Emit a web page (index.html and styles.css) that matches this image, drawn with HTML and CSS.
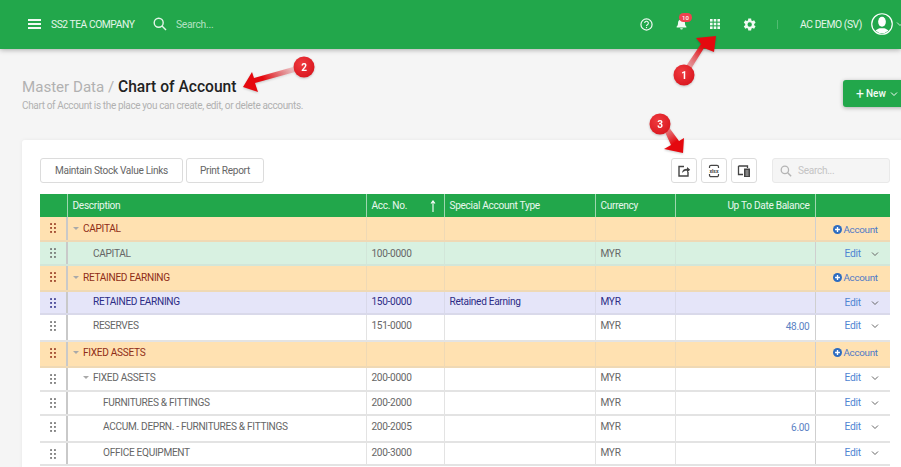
FILE: index.html
```html
<!DOCTYPE html>
<html lang="en">
<head>
<meta charset="utf-8">
<title>Chart of Account</title>
<link rel="stylesheet" href="styles.css">
</head>
<body>
<div class="app">
  <svg width="0" height="0" class="defs">
    <defs>
      <symbol id="grip" viewBox="0 0 6 10"><g fill="currentColor"><rect x=".2" y=".2" width="1.7" height="1.7"/><rect x="4.1" y=".2" width="1.7" height="1.7"/><rect x=".2" y="4.1" width="1.7" height="1.7"/><rect x="4.1" y="4.1" width="1.7" height="1.7"/><rect x=".2" y="8.100" width="1.7" height="1.7"/><rect x="4.1" y="8.100" width="1.7" height="1.7"/></g></symbol>
      <symbol id="chev" viewBox="0 0 8 6"><path d="M1 1.5l3 3 3-3" fill="none" stroke="currentColor" stroke-width="1"/></symbol>
      <symbol id="plus" viewBox="0 0 10 10"><circle cx="5" cy="5" r="5" fill="currentColor"/><path d="M5 2.3v5.4M2.3 5h5.4" stroke="#fff" stroke-width="1.5"/></symbol>
    </defs>
  </svg>
  <header class="topbar">
    <button class="menu" aria-label="Menu"><span></span><span></span><span></span></button>
    <div class="company">SS2 TEA COMPANY</div>
    <svg class="search-ico" viewBox="0 0 14 14" width="14" height="14"><circle cx="5.7" cy="5.7" r="4.5" fill="none" stroke="currentColor" stroke-width="1.4"/><path d="M9 9l4 4" stroke="currentColor" stroke-width="1.5"/></svg>
    <div class="top-search">Search...</div>
    <div class="spacer"></div>
    <svg class="t-ico help" viewBox="0 0 14 14" width="13" height="13"><circle cx="7" cy="7" r="6" fill="none" stroke="currentColor" stroke-width="1.3"/><path d="M5 5.5a2 2 0 1 1 3 1.7c-.7.4-1 .7-1 1.5" fill="none" stroke="currentColor" stroke-width="1.2"/><rect x="6.4" y="9.6" width="1.2" height="1.3" fill="currentColor"/></svg>
    <div class="bell">
      <svg viewBox="0 0 12 13" width="11" height="12"><path d="M6 0.8c.6 0 1 .4 1 .9 1.8.4 2.8 1.9 2.8 3.7 0 2 .6 3 1.5 3.9v.9H.7v-.9c.9-.9 1.5-1.9 1.5-3.9C2.2 3.6 3.2 2.100 5 1.700c0-.5.4-.9 1-.9zM4.500 11h3a1.500 1.500 0 0 1-3 0z" fill="currentColor"/></svg>
      <span class="badge">10</span>
    </div>
    <svg class="t-ico apps" viewBox="0 0 10 10" width="10" height="10"><g fill="currentColor"><rect width="2.600" height="2.600"/><rect x="3.700" width="2.600" height="2.600"/><rect x="7.400" width="2.600" height="2.600"/><rect y="3.700" width="2.600" height="2.600"/><rect x="3.700" y="3.700" width="2.600" height="2.600"/><rect x="7.400" y="3.700" width="2.600" height="2.600"/><rect y="7.400" width="2.600" height="2.600"/><rect x="3.700" y="7.400" width="2.600" height="2.600"/><rect x="7.400" y="7.400" width="2.600" height="2.600"/></g></svg>
    <svg class="t-ico gear" viewBox="0 0 24 24" width="15" height="15"><path fill="currentColor" d="M19.400 13a7.500 7.500 0 0 0 0-2l2.300-1.800-2.300-3.900-2.700 1.100a7.500 7.500 0 0 0-1.700-1L14.600 2.500H10l-.4 2.900a7.500 7.500 0 0 0-1.700 1L5.200 5.300 2.900 9.200 5.200 11a7.500 7.500 0 0 0 0 2l-2.300 1.800 2.300 3.900 2.700-1.100a7.500 7.500 0 0 0 1.700 1l.4 2.900h4.600l.4-2.900a7.500 7.500 0 0 0 1.700-1l2.700 1.100 2.300-3.900zM12.300 15.500a3.500 3.500 0 1 1 0-7 3.500 3.500 0 0 1 0 7z"/></svg>
    <div class="divider"></div>
    <div class="user">AC DEMO (SV)</div>
    <svg class="avatar" viewBox="0 0 24 24" width="22" height="22"><circle cx="12" cy="12" r="11.200" fill="#21a74b" stroke="#fff" stroke-width="1.300"/><clipPath id="av"><circle cx="12" cy="12" r="10"/></clipPath><g clip-path="url(#av)" fill="#fff"><ellipse cx="12" cy="9.500" rx="4.200" ry="5.500"/><path d="M3 24c0-5 4-6.500 6.500-7.500h5C17 17.500 21 19 21 24z"/></g></svg>
    <svg class="user-chev"><use href="#chev"/></svg>
  </header>

  <main class="page">
    <div class="title-row">
      <div>
        <h1 class="title"><span class="crumb">Master Data / </span><strong>Chart of Account</strong></h1>
        <p class="sub">Chart of Account is the place you can create, edit, or delete accounts.</p>
      </div>
      <button class="new-btn"><span class="plus">+</span>New<svg class="new-chev"><use href="#chev"/></svg></button>
    </div>

    <section class="card">
      <div class="toolbar">
        <button class="btn">Maintain Stock Value Links</button>
        <button class="btn btn-print">Print Report</button>
        <div class="spacer"></div>
        <button class="icon-btn" aria-label="Export"><svg viewBox="0 0 14 14" width="14" height="14"><path d="M7 2.500H2v9.500h9V8" fill="none" stroke="currentColor" stroke-width="1.400"/><path d="M5 9c.2-2.800 2-4.300 5-4.300V3l3.200 2.700L10 8.400V6.700C8 6.700 6.400 7.300 5 9z" fill="currentColor"/></svg></button>
        <button class="icon-btn" aria-label="Excel"><svg viewBox="0 0 14 14" width="14" height="14"><path d="M2.500 4V2.800a1.500 1.500 0 0 1 1.500-1.500h6a1.500 1.500 0 0 1 1.500 1.500V4M2.500 10v1.200a1.500 1.500 0 0 0 1.500 1.500h6a1.500 1.500 0 0 0 1.500-1.500V10" fill="none" stroke="currentColor" stroke-width="1.200"/><text x="7" y="8.900" class="xlsx">xlsx</text></svg></button>
        <button class="icon-btn" aria-label="Columns"><svg viewBox="0 0 14 14" width="14" height="14"><path d="M1.500 2h9v2M6 10.500H1.500V2" fill="none" stroke="currentColor" stroke-width="1.300"/><rect x="7" y="4.500" width="6" height="8.500" fill="currentColor"/><path d="M8.500 7h3M8.500 9h3M8.500 11h3" stroke="#fff" stroke-width=".7"/></svg></button>
        <div class="search-box"><svg viewBox="0 0 14 14" width="12" height="12"><circle cx="5.700" cy="5.700" r="4.300" fill="none" stroke="currentColor" stroke-width="1.500"/><path d="M9 9l4 4" stroke="currentColor" stroke-width="1.700"/></svg><span>Search...</span></div>
      </div>

      <table class="grid">
        <colgroup><col class="c-drag"><col class="c-desc"><col class="c-acc"><col class="c-type"><col class="c-cur"><col class="c-bal"><col class="c-act"></colgroup>
        <thead>
          <tr><th></th><th>Description</th><th><div class="sort">Acc. No.<svg viewBox="0 0 6 12" width="6" height="12"><path d="M3 1v11M1 3.500L3 1l2 2.500" fill="none" stroke="#fff" stroke-width="1.100"/></svg></div></th><th>Special Account Type</th><th>Currency</th><th class="num">Up To Date Balance</th><th></th></tr>
        </thead>
        <tbody>
          <tr class="group h24 t5 a6">
            <td class="drag"><svg class="grip"><use href="#grip"/></svg></td>
            <td><span class="l1"><i class="caret"></i>CAPITAL</span></td><td></td><td></td><td></td><td></td>
            <td class="act"><a class="add"><svg class="plus-ico"><use href="#plus"/></svg>Account</a></td>
          </tr>
          <tr class="green h24 t5 a5">
            <td class="drag"><svg class="grip"><use href="#grip"/></svg></td>
            <td><span class="l2">CAPITAL</span></td><td>100-0000</td><td></td><td>MYR</td><td></td>
            <td class="act"><a class="edit">Edit</a><svg class="row-chev"><use href="#chev"/></svg></td>
          </tr>
          <tr class="group h26 t5 a5">
            <td class="drag"><svg class="grip"><use href="#grip"/></svg></td>
            <td><span class="l1"><i class="caret"></i>RETAINED EARNING</span></td><td></td><td></td><td></td><td></td>
            <td class="act"><a class="add"><svg class="plus-ico"><use href="#plus"/></svg>Account</a></td>
          </tr>
          <tr class="blue h23 t3 a4">
            <td class="drag"><svg class="grip"><use href="#grip"/></svg></td>
            <td><span class="l2">RETAINED EARNING</span></td><td>150-0000</td><td>Retained Earning</td><td>MYR</td><td></td>
            <td class="act"><a class="edit">Edit</a><svg class="row-chev"><use href="#chev"/></svg></td>
          </tr>
          <tr class="h27 t4 a4">
            <td class="drag"><svg class="grip"><use href="#grip"/></svg></td>
            <td><span class="l2">RESERVES</span></td><td>151-0000</td><td></td><td>MYR</td><td class="num bal">48.00</td>
            <td class="act"><a class="edit">Edit</a><svg class="row-chev"><use href="#chev"/></svg></td>
          </tr>
          <tr class="group h26 t4 a4">
            <td class="drag"><svg class="grip"><use href="#grip"/></svg></td>
            <td><span class="l1"><i class="caret"></i>FIXED ASSETS</span></td><td></td><td></td><td></td><td></td>
            <td class="act"><a class="add"><svg class="plus-ico"><use href="#plus"/></svg>Account</a></td>
          </tr>
          <tr class="h24 t3 a3">
            <td class="drag"><svg class="grip"><use href="#grip"/></svg></td>
            <td><span class="l2 has-caret"><i class="caret"></i>FIXED ASSETS</span></td><td>200-0000</td><td></td><td>MYR</td><td></td>
            <td class="act"><a class="edit">Edit</a><svg class="row-chev"><use href="#chev"/></svg></td>
          </tr>
          <tr class="h24 t4 a4">
            <td class="drag"><svg class="grip"><use href="#grip"/></svg></td>
            <td><span class="l3">FURNITURES &amp; FITTINGS</span></td><td>200-2000</td><td></td><td>MYR</td><td></td>
            <td class="act"><a class="edit">Edit</a><svg class="row-chev"><use href="#chev"/></svg></td>
          </tr>
          <tr class="h27 t4 a4">
            <td class="drag"><svg class="grip"><use href="#grip"/></svg></td>
            <td><span class="l3">ACCUM. DEPRN. - FURNITURES &amp; FITTINGS</span></td><td>200-2005</td><td></td><td>MYR</td><td class="num bal">6.00</td>
            <td class="act"><a class="edit">Edit</a><svg class="row-chev"><use href="#chev"/></svg></td>
          </tr>
          <tr class="h23 t3 a3">
            <td class="drag"><svg class="grip"><use href="#grip"/></svg></td>
            <td><span class="l3">OFFICE EQUIPMENT</span></td><td>200-3000</td><td></td><td>MYR</td><td></td>
            <td class="act"><a class="edit">Edit</a><svg class="row-chev"><use href="#chev"/></svg></td>
          </tr>
        </tbody>
      </table>
    </section>
  </main>

  <svg class="notes" viewBox="0 0 901 467" width="901" height="467">
    <defs>
      <linearGradient id="a1" x1="686" y1="66" x2="712" y2="40" gradientUnits="userSpaceOnUse"><stop offset="0" stop-color="#e9585f" stop-opacity=".45"/><stop offset=".7" stop-color="#e5090f"/></linearGradient>
      <linearGradient id="a2" x1="295" y1="69" x2="250" y2="85" gradientUnits="userSpaceOnUse"><stop offset="0" stop-color="#e9585f" stop-opacity=".25"/><stop offset=".7" stop-color="#e5090f"/></linearGradient>
      <linearGradient id="a3" x1="665" y1="128" x2="680" y2="148" gradientUnits="userSpaceOnUse"><stop offset="0" stop-color="#e9585f" stop-opacity=".6"/><stop offset=".7" stop-color="#e5090f"/></linearGradient>
      <radialGradient id="dot" cx=".4" cy=".35" r=".75"><stop offset="0" stop-color="#ef3b40"/><stop offset="1" stop-color="#d8141c"/></radialGradient>
    </defs>
    <polygon points="686,66 691,69 704,48 714,52 716,36 696,38 701,44" fill="url(#a1)"/>
    <polygon points="293,67 295,72 255,83 258,92 243,87 252,72 254,78" fill="url(#a2)"/>
    <polygon points="664,130 668,126 679,141 684,138 683,153 664,149 671,145" fill="url(#a3)"/>
    <g class="dot"><circle cx="684" cy="75" r="10.500" fill="url(#dot)"/><text x="684" y="79">1</text></g>
    <g class="dot"><circle cx="304" cy="67" r="10.500" fill="url(#dot)"/><text x="304" y="71">2</text></g>
    <g class="dot"><circle cx="660" cy="124" r="10.500" fill="url(#dot)"/><text x="660" y="128">3</text></g>
  </svg>
</div>
</body>
</html>
```
FILE: styles.css
```css
* { box-sizing: border-box; }
html, body { margin: 0; padding: 0; }
body { font-family: Roboto, "Liberation Sans", sans-serif; background: #f5f5f5; color: #666; }
button { font-family: inherit; }
.app { position: relative; width: 901px; height: 467px; overflow: hidden; }
.defs { position: absolute; }
.spacer { flex: 1; }

.topbar { height: 49px; background: #22a74b; display: flex; align-items: center; color: #e4f5e9; box-shadow: 0 1px 5px rgba(0,0,0,.3); position: relative; font-size: 10.300px; letter-spacing: -.27px; padding-bottom: 1px; }
.menu { width: 13px; height: 10px; margin-left: 28px; padding: 0; border: 0; background: none; display: flex; flex-direction: column; justify-content: space-between; }
.menu span { display: block; height: 1.600px; background: #f1faf4; }
.company { margin-left: 10px; width: 101px; white-space: nowrap; letter-spacing: -.46px; }
.search-ico { margin-left: 1px; color: #e4f5e9; }
.top-search { margin-left: 9px; color: #b5e2c3; }
.t-ico { color: #f1faf4; display: block; }
.bell { position: relative; margin-left: 23px; height: 12px; color: #f1faf4; }
.bell svg { display: block; }
.badge { position: absolute; left: 3px; top: -5px; width: 13px; height: 9px; border-radius: 5px; background: #f0424f; color: #fff; font-size: 6px; letter-spacing: 0; line-height: 9px; text-align: center; font-weight: 500; }
.apps { margin-left: 23px; }
.gear { margin-left: 22px; }
.divider { width: 1px; height: 9px; margin-left: 20px; background: #52bb72; }
.user { margin-left: 22px; width: 62px; white-space: nowrap; letter-spacing: -.42px; }
.avatar { margin-left: 9px; display: block; flex: none; }
.user-chev { width: 8px; height: 6px; margin-left: 3px; flex: none; margin-right: -3px; color: #cdebd7; }

.page { display: block; }
.title-row { display: flex; justify-content: space-between; align-items: flex-start; padding: 29px 0 0 22px; height: 91px; }
.title { margin: 0; font-size: 15.100px; line-height: 19px; font-weight: 400; color: #b1b1b1; }
.title strong { font-size: 15.600px; font-weight: 500; color: #222; }
.sub { margin: 2px 0 0; font-size: 10px; letter-spacing: -.36px; line-height: 13px; color: #b1b1b1; }
.new-btn { margin-top: 2px; margin-right: -12px; width: 70px; height: 27px; background: #22a74b; border: 0; border-radius: 3px; color: #f4fbf6; font-size: 10px; font-weight: 500; display: flex; align-items: center; justify-content: flex-start; padding: 0 0 0 13px; box-shadow: 0 1px 4px rgba(0,0,0,.3); }
.plus { font-size: 14px; line-height: 14px; margin-right: 2px; font-weight: 400; }
.new-chev { width: 8px; height: 6px; margin-left: 4px; }

.card { margin-left: 22px; width: 890px; height: 340px; background: #fff; border-radius: 3px 0 0 0; padding: 18px 0 0 18px; box-shadow: 0 0 4px rgba(0,0,0,.06); }
.toolbar { display: flex; align-items: flex-start; height: 26px; margin-bottom: 10px; width: 850px; }
.btn { height: 25px; padding: 0; width: 143px; background: #fff; border: 1px solid #dcdcdc; border-radius: 3px; font-size: 10.100px; letter-spacing: -.3px; color: #666; }
.btn-print { width: 78px; margin-left: 3px; }
.icon-btn { width: 26px; height: 25px; margin-left: 4px; background: #fff; border: 1px solid #dcdcdc; border-radius: 3px; padding: 0; color: #444; display: flex; align-items: center; justify-content: center; }
.spacer + .icon-btn { margin-left: 0; }
.xlsx { font-size: 5px; font-weight: 700; text-anchor: middle; fill: currentColor; letter-spacing: 0; }
.search-box { width: 118px; height: 25px; margin-left: 15px; background: #f5f5f5; border: 1px solid #e9e9e9; border-radius: 3px; display: flex; align-items: center; padding-left: 7px; color: #b4b4b4; font-size: 10.100px; letter-spacing: -.3px; }
.search-box span { margin-left: 6px; color: #c4c4c4; }

.grid { border-collapse: collapse; table-layout: fixed; width: 850px; font-size: 10.100px; letter-spacing: -.3px; }
.c-drag { width: 27px; } .c-desc { width: 299px; } .c-acc { width: 78px; } .c-type { width: 151px; } .c-cur { width: 80px; } .c-bal { width: 140px; } .c-act { width: 75px; }
.grid th { background: #22a74b; color: #e9f7ee; height: 23px; padding: 0 5px; text-align: left; font-weight: 400; border-left: 1px solid #9ed7af; border-right: 1px solid #9ed7af; }
.grid th:first-child { border-left: 0; }
.grid th:last-child { border-right: 0; }
.grid th.num { text-align: right; padding-right: 5px; }
.sort { display: flex; justify-content: space-between; align-items: center; padding-right: 3px; }
.grid td { padding: 5px 5px 0; vertical-align: top; border-style: solid; border-width: 0 1px 2px; border-color: #e3e3e3; line-height: 13px; white-space: nowrap; overflow: hidden; }
.grid td:first-child { border-left: 0; }
.grid td:last-child { border-right: 0; }
.grid td:nth-child(1) { border-right: 2px solid #c9c9c9; }
.grid td:nth-child(6) { border-right-color: #cfcfcf; }
.h23 td { height: 23px; } .h24 td { height: 24px; } .h26 td { height: 26px; } .h27 td { height: 27px; }
.t3 td { padding-top: 3px; } .t4 td { padding-top: 4px; } .t5 td { padding-top: 5px; } .t6 td { padding-top: 6px; }
.a3 .act { padding-top: 3px; } .a4 .act { padding-top: 4px; } .a5 .act { padding-top: 5px; } .a6 .act { padding-top: 6px; }
.grid td.num { text-align: right; vertical-align: middle; padding: 0 5px 2px 0; }
.grid td.bal { color: #5b82c4; }

.group td { background: #ffe1b1; color: #8f2d17; border-color: #efd9b5; }
.green td { background: #d8f1e1; border-color: #d2e6d9; }
.blue td { background: #e5e5f9; color: #2c2c86; border-color: #d9d9ea; }
.grid .drag { padding: 0; text-align: center; color: #666; }
.grid .group .drag { color: #8f2d17; }
.grid .blue .drag { color: #2c2c86; }
.grip { width: 6px; height: 10px; display: block; margin: 6px auto 0; }
.l1 { display: inline-block; }
.l2 { padding-left: 20px; display: inline-block; }
.l2.has-caret { padding-left: 10px; }
.l3 { padding-left: 30px; display: inline-block; }
.caret { display: inline-block; width: 0; height: 0; border-left: 3px solid transparent; border-right: 3px solid transparent; border-top: 3px solid #a9a9a9; margin: 0 4px 1px 0; vertical-align: middle; }
.act { text-align: left; }
.add { color: #4f79c7; display: inline-flex; align-items: center; margin-left: 12px; font-size: 9.800px; letter-spacing: -.3px; }
.plus-ico { width: 9px; height: 9px; margin-right: 2px; color: #2d6cc0; }
.edit { color: #4f86d3; margin-left: 24px; font-size: 10.300px; }
.row-chev { width: 8px; height: 6px; margin-left: 10px; color: #666; }

.notes { position: absolute; left: 0; top: 0; pointer-events: none; filter: drop-shadow(0 1px 1px rgba(0,0,0,.2)); }
.dot text { font: 700 10px Roboto, sans-serif; fill: #fff; text-anchor: middle; }
```
